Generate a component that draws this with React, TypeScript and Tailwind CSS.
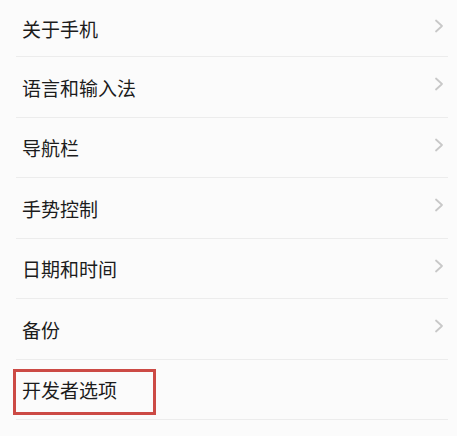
import React from 'react'

const items = ['关于手机', '语言和输入法', '导航栏', '手势控制', '日期和时间', '备份', '开发者选项']

const Chevron = () => (
  <svg width="10" height="14" viewBox="0 0 10 14" fill="none" className="shrink-0 block">
    <path d="M2 1.5 L8 7 L2 12.5" stroke="#c8c8c8" strokeWidth="1.8" strokeLinecap="round" strokeLinejoin="round" />
  </svg>
)

export default function App() {
  return (
    <div
      className="w-[457px] h-[436px] bg-[#fbfbfb] overflow-hidden"
      style={{ fontFamily: '"Noto Sans CJK SC", "Noto Sans", sans-serif' }}
    >
      {items.map((label, i) => {
        const last = i === items.length - 1
        return (
          <div
            key={label}
            className={`relative ml-4 mr-[9px] flex items-center justify-between border-b border-[#ececec] ${
              i === 0 ? 'h-[57px]' : 'h-[60.5px]'
            }`}
          >
            <span className={`pl-[6px] text-[19px] leading-none text-[#1c1c1c] ${i === 0 ? 'pt-0' : 'pt-[1px]'}`}>
              {label}
            </span>
            {!last && (
              <span className="mr-[4px] -mt-[5px]">
                <Chevron />
              </span>
            )}
            {last && (
              <div className="absolute left-[-3px] top-[9px] w-[143px] h-[46px] border-[3px] border-[#cc4a45]" />
            )}
          </div>
        )
      })}
    </div>
  )
}
